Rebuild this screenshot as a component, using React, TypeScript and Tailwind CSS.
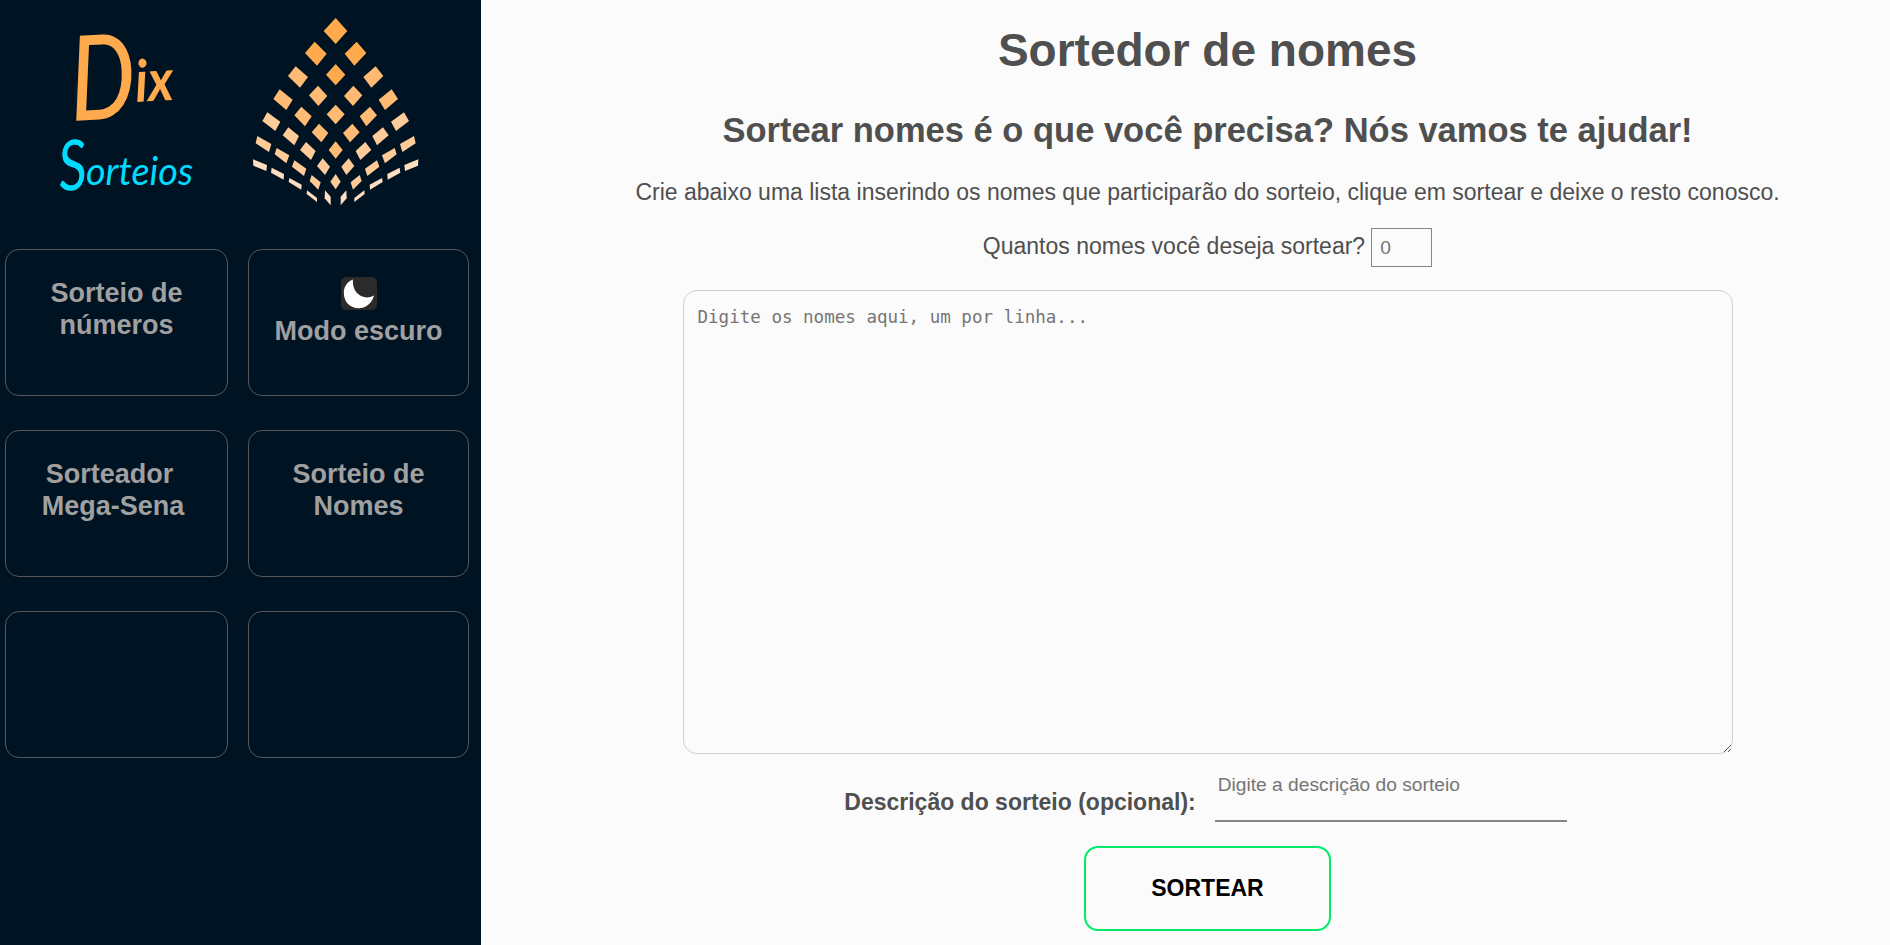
import React from "react";

type Quad = [string, string];

const GOLD = "#ffab4d";
const AMBER = "#ffbb73";
const PEACH = "#ffcc99";
const CREAM = "#ffdfc0";

const centerTiles: Quad[] = [
  ["317,54 352,93 317,132 281,93", GOLD],
  ["317,192 346,224 317,256 288,224", GOLD],
  ["317,314 344,343 317,373 290,343", AMBER],
  ["317,424 338,450 317,476 296,450", AMBER],
  ["317,522 332,545 317,568 301,545", PEACH],
];

const sideTiles: Quad[] = [
  ["254,125 290,161 261,197 225,159", GOLD],
  ["197,199 234,231 210,263 174,228", AMBER],
  ["264,257 292,288 265,318 237,286", AMBER],
  ["149,268 188,299 169,330 130,297", AMBER],
  ["214,320 245,349 225,379 193,346", AMBER],
  ["267,371 295,399 274,427 245,397", AMBER],
  ["112,337 151,365 136,393 97,363", PEACH],
  ["175,382 207,408 193,436 158,406", PEACH],
  ["228,426 257,453 243,480 210,450", PEACH],
  ["278,475 300,500 285,525 261,498", PEACH],
  ["82,408 124,432 117,456 77,430", PEACH],
  ["140,444 178,466 169,490 134,463", PEACH],
  ["193,481 229,506 222,528 186,500", PEACH],
  ["245,525 272,547 265,569 239,543", PEACH],
  ["69,478 111,495 109,513 70,497", CREAM],
  ["125,503 162,522 161,539 123,518", CREAM],
  ["178,534 215,554 214,569 176,546", CREAM],
  ["231,571 261,594 261,606 230,582", CREAM],
  ["285,571 302,590 302,616 284,595", CREAM],
];

function Wordmark() {
  return (
    <svg className="h-[240px] w-[230px]" viewBox="0 0 230 240" fontFamily="Lato, sans-serif" fontStyle="italic">
      <g fill="#ffab4d" fontWeight="500">
        <text transform="translate(72 121) rotate(-3) scale(0.78 1)" fontSize="118">D</text>
        <text transform="translate(136 102) rotate(-3) scale(0.9 1)" fontSize="58" fontWeight="700">ix</text>
      </g>
      <g fill="#00dcff">
        <text transform="translate(60 191) rotate(-4) scale(0.8 1)" fontSize="70">S</text>
        <text x="86" y="185" fontSize="39" textLength="107" lengthAdjust="spacingAndGlyphs">orteios</text>
      </g>
    </svg>
  );
}

function Emblem() {
  return (
    <svg className="h-[240px] w-[250px]" viewBox="0 0 750 720">
      {centerTiles.map(([points, fill]) => (
        <polygon key={points} points={points} fill={fill} />
      ))}
      {sideTiles.map(([points, fill]) => (
        <g key={points} fill={fill}>
          <polygon points={points} />
          <polygon points={points} transform="translate(634 0) scale(-1 1)" />
        </g>
      ))}
    </svg>
  );
}

function Card({ children }: { children?: React.ReactNode }) {
  return (
    <div className="flex h-[147px] flex-col items-center rounded-[14px] border border-[#55575a] pt-[27px] text-center text-[27px] leading-[32px] font-bold text-[#a0a0a0]">
      {children}
    </div>
  );
}

export default function App() {
  return (
    <div className="flex h-[945px] w-full overflow-hidden bg-[#fbfbfb] font-['Liberation_Sans',Arial,sans-serif] text-[#4f4f4f]">
      <aside className="w-[481px] shrink-0 bg-[#001323]">
        <div className="flex h-[249px] items-start">
          <Wordmark />
          <Emblem />
        </div>
        <nav className="grid grid-cols-[223px_221px] gap-x-[20px] gap-y-[34px] pl-[5px]">
          <Card>
            <span>Sorteio de</span>
            <span>números</span>
          </Card>
          <Card>
            <svg className="h-[33px] w-[36px] shrink-0" viewBox="0 0 36 33">
              <rect width="36" height="33" rx="5.5" fill="#2b2b2b" />
              <path d="M12 2.5C1.500 6.500 .5 19 6.500 26.500C14 34.500 29.500 32.500 33 18.500C22 24.500 10.500 15.500 12 2.500Z" fill="#fff" />
            </svg>
            <span className="mt-[5px]">Modo escuro</span>
          </Card>
          <Card>
            <span className="mr-[14px]">Sorteador</span>
            <span className="mr-[7px]">Mega-Sena</span>
          </Card>
          <Card>
            <span>Sorteio de</span>
            <span>Nomes</span>
          </Card>
          <Card />
          <Card />
        </nav>
      </aside>

      <main className="flex flex-1 flex-col items-center pt-[24px] pl-[44px]">
        <h1 className="text-[46px] leading-[52px] font-bold">Sortedor de nomes</h1>
        <h2 className="mt-[34px] text-[34.5px] leading-[40px] font-bold">
          Sortear nomes é o que você precisa? Nós vamos te ajudar!
        </h2>
        <p className="mt-[29px] text-[23px] leading-[26px]">
          Crie abaixo uma lista inserindo os nomes que participarão do sorteio, clique em sortear e deixe o resto conosco.
        </p>
        <div className="mt-[23px] flex items-start gap-[6px]">
          <label htmlFor="quantidade" className="pt-[5px] text-[23px] leading-[26px]">
            Quantos nomes você deseja sortear?
          </label>
          <input
            id="quantidade"
            placeholder="0"
            className="h-[39px] w-[61px] border border-[#858585] bg-transparent pl-[8px] text-[19.2px] placeholder:text-[#757575]"
          />
        </div>
        <textarea
          placeholder="Digite os nomes aqui, um por linha..."
          className="mt-[23px] block h-[464px] w-[1050px] shrink-0 resize rounded-[14px] border border-[#cfcfcf] bg-transparent px-[14px] py-[15px] font-['DejaVu_Sans_Mono',monospace] text-[17.55px] leading-[23px] placeholder:text-[#757575]"
        />
        <div className="mr-[4px] flex h-[68px] items-start gap-[19px]">
          <label htmlFor="descricao" className="pt-[35px] text-[23px] leading-[26px] font-bold">
            Descrição do sorteio (opcional):
          </label>
          <input
            id="descricao"
            placeholder="Digite a descrição do sorteio"
            className="h-[68px] w-[352px] border-b-2 border-[#858585] bg-transparent pb-[5px] pl-[3px] text-[19.2px] placeholder:text-[#757575]"
          />
        </div>
        <button className="mt-[24px] h-[85px] w-[247px] shrink-0 rounded-[14px] border-2 border-[#00eb69] text-[23px] font-bold text-black">
          SORTEAR
        </button>
      </main>
    </div>
  );
}
